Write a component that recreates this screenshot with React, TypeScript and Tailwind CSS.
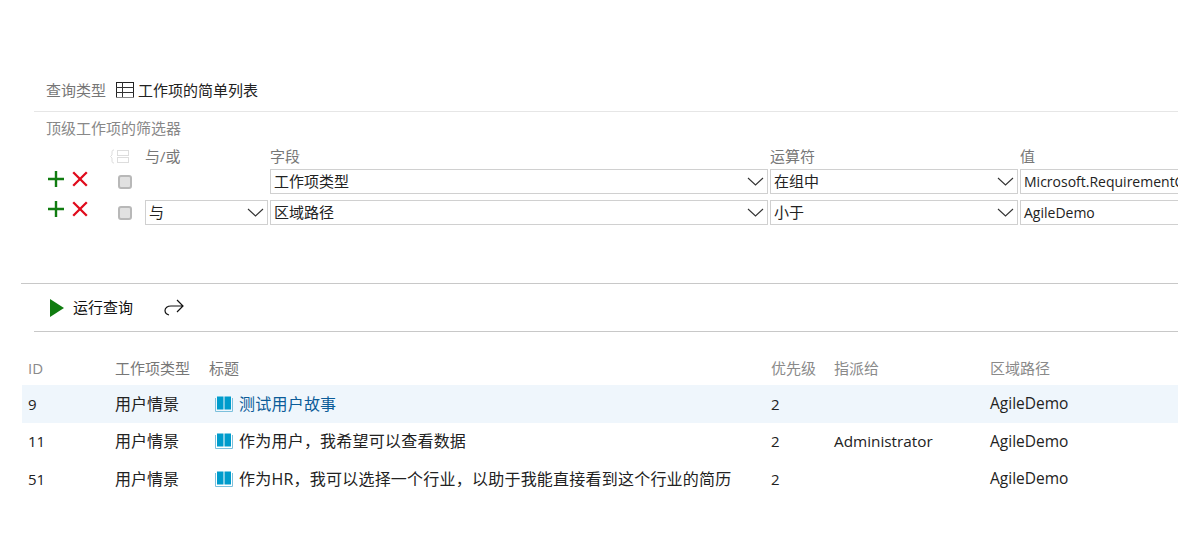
import React from 'react';

const FONT = "font-['Open_Sans','Noto_Sans_CJK_SC',sans-serif]";

function Chevron() {
  return (
    <svg width="17" height="9" viewBox="0 0 17 9" fill="none" stroke="#333" strokeWidth="1.1" className="shrink-0">
      <path d="M1 1l7.5 7L16 1" />
    </svg>
  );
}

function Plus() {
  return (
    <svg width="16" height="16" viewBox="0 0 16 16" className="shrink-0">
      <path d="M6.8 0h2.4v6.800H16v2.400H9.200V16H6.800V9.200H0V6.800h6.800z" fill="#107c10" />
    </svg>
  );
}

function Cross() {
  return (
    <svg width="16" height="16" viewBox="0 0 16 16" className="shrink-0">
      <path d="M1.200 1.200l13.600 13.600M14.800 1.200L1.200 14.800" stroke="#e00b1c" strokeWidth="2.300" />
    </svg>
  );
}

function Check() {
  return <div className="w-[14px] h-[14px] rounded-[3px] bg-[#e1e1e1] border-2 border-[#b8b8b8]" />;
}

function Field({ text, select = true }: { text: string; select?: boolean }) {
  return (
    <div className={`h-[25px] bg-white border border-[#d0d0d0] flex items-center justify-between pl-[3px] pr-[3px] text-[#222] whitespace-nowrap overflow-hidden ${select ? 'text-[15px]' : 'text-[14px]'}`}>
      <span className="leading-none">{text}</span>
      {select && <Chevron />}
    </div>
  );
}

function BookIcon() {
  return (
    <svg width="18" height="16" viewBox="0 0 18 16" className="shrink-0">
      <path d="M0.500 2v13.500h17V2" fill="none" stroke="#7cc0dc" strokeWidth="1" />
      <path d="M2 0.500h6.500v13H2zM9.500 0.500H16v13H9.500z" fill="#009ccc" />
    </svg>
  );
}

const rows = [
  { id: '9', title: '测试用户故事', link: true, who: '', active: true },
  { id: '11', title: '作为用户，我希望可以查看数据', link: false, who: 'Administrator', active: false },
  { id: '51', title: '作为HR，我可以选择一个行业，以助于我能直接看到这个行业的简历', link: false, who: '', active: false },
];

const TABLE_COLS = 'grid grid-cols-[87px_94px_562px_63px_156px_1fr] items-center';
const FILTER_COLS = 'grid grid-cols-[97px_125px_500px_250px_200px] items-center';

export default function App() {
  return (
    <div className={`w-[1178px] h-[560px] overflow-hidden bg-white pt-[80px] ${FONT}`}>
      <div className="ml-[34px]">
        <div className="flex items-center h-[20px] pl-[12px] text-[15px]">
          <span className="text-[#767676] w-[70px]">查询类型</span>
          <svg width="18" height="16" viewBox="0 0 18 16" fill="none" className="shrink-0">
            <rect x="0.500" y="0.500" width="17" height="15" stroke="#222" strokeWidth="1" />
            <path d="M0 5.500h18M0 10.500h18M6.500 0v16" stroke="#333" strokeWidth="1" />
            <path d="M0 15.500h18" stroke="#888" strokeWidth="1" />
          </svg>
          <span className="text-[#222] ml-[4px]">工作项的简单列表</span>
        </div>

        <div className="mt-[11px] border-t border-[#e6e6e6] pt-[6px]">
          <div className="pl-[12px] h-[20px] flex items-center text-[15px] text-[#888]">顶级工作项的筛选器</div>

          <div className={`${FILTER_COLS} ml-[14px] mt-[7px] h-[18px] text-[15px] text-[#777]`}>
            <svg width="20" height="15" viewBox="0 0 20 15" fill="none" stroke="#ddd" strokeWidth="1" className="ml-[62px]">
              <path d="M4 1C2 1 2 2 2 4v2L0.500 7.500 2 9v2c0 2 0 3 2 3" />
              <rect x="7.500" y="1.500" width="11" height="5" />
              <rect x="7.500" y="8.500" width="11" height="5" />
            </svg>
            <span>与/或</span>
            <span>字段</span>
            <span>运算符</span>
            <span>值</span>
          </div>

          <div className={`${FILTER_COLS} ml-[14px] mt-[6px]`}>
            <div className="flex items-center -mt-[5px]">
              <Plus />
              <span className="ml-[8px]"><Cross /></span>
              <span className="ml-[30px] mt-[5px]"><Check /></span>
            </div>
            <div />
            <div className="pr-[2px]"><Field text="工作项类型" /></div>
            <div className="pr-[2px]"><Field text="在组中" /></div>
            <Field text="Microsoft.RequirementCategory" select={false} />
          </div>

          <div className={`${FILTER_COLS} ml-[14px] mt-[6px]`}>
            <div className="flex items-center -mt-[7px]">
              <Plus />
              <span className="ml-[8px]"><Cross /></span>
              <span className="ml-[30px] mt-[7px]"><Check /></span>
            </div>
            <div className="pr-[2px]"><Field text="与" /></div>
            <div className="pr-[2px]"><Field text="区域路径" /></div>
            <div className="pr-[2px]"><Field text="小于" /></div>
            <Field text="AgileDemo" select={false} />
          </div>
        </div>
      </div>

      <div className="ml-[21px] mt-[58px] border-t border-[#c8c8c8]">
        <div className="ml-[13px] h-[48px] border-b border-[#c8c8c8] flex items-center pl-[16px] text-[15px] text-[#111]">
          <svg width="14" height="18" viewBox="0 0 14 18" className="shrink-0">
            <path d="M0 0l14 9-14 9z" fill="#107c10" />
          </svg>
          <span className="ml-[9px]">运行查询</span>
          <svg width="20" height="18" viewBox="0 0 20 18" fill="none" stroke="#111" strokeWidth="1.200" className="ml-[31px] shrink-0">
            <path d="M19 7H7C3.500 7 1 8.800 1 11.500c0 2.200 1.500 3.800 4 4.500M13 1l6 6-6 6" />
          </svg>
        </div>
      </div>

      <div className="mt-[25px] ml-[22px] text-[15px]">
        <div className={`${TABLE_COLS} h-[19px] pl-[6px] text-[#8a8a8a]`}>
          <span>ID</span>
          <span className="text-[#777]">工作项类型</span>
          <span className="text-[#777]">标题</span>
          <span>优先级</span>
          <span>指派给</span>
          <span>区域路径</span>
        </div>
        <div className="mt-[9px]">
          {rows.map((r) => (
            <div key={r.id} className={`${TABLE_COLS} h-[37.5px] pl-[6px] text-[#222] ${r.active ? 'bg-[#eff6fc]' : ''}`}>
              <span>{r.id}</span>
              <span className="text-[16px]">用户情景</span>
              <span className="flex items-center pl-[6px] whitespace-nowrap">
                <BookIcon />
                <span className={`ml-[6px] text-[16px] tracking-[0.22px] ${r.link ? 'text-[#0b5c99]' : ''}`}>{r.title}</span>
              </span>
              <span>2</span>
              <span className="text-[15.3px]">{r.who}</span>
              <span className="text-[15.5px]">AgileDemo</span>
            </div>
          ))}
        </div>
      </div>
    </div>
  );
}
